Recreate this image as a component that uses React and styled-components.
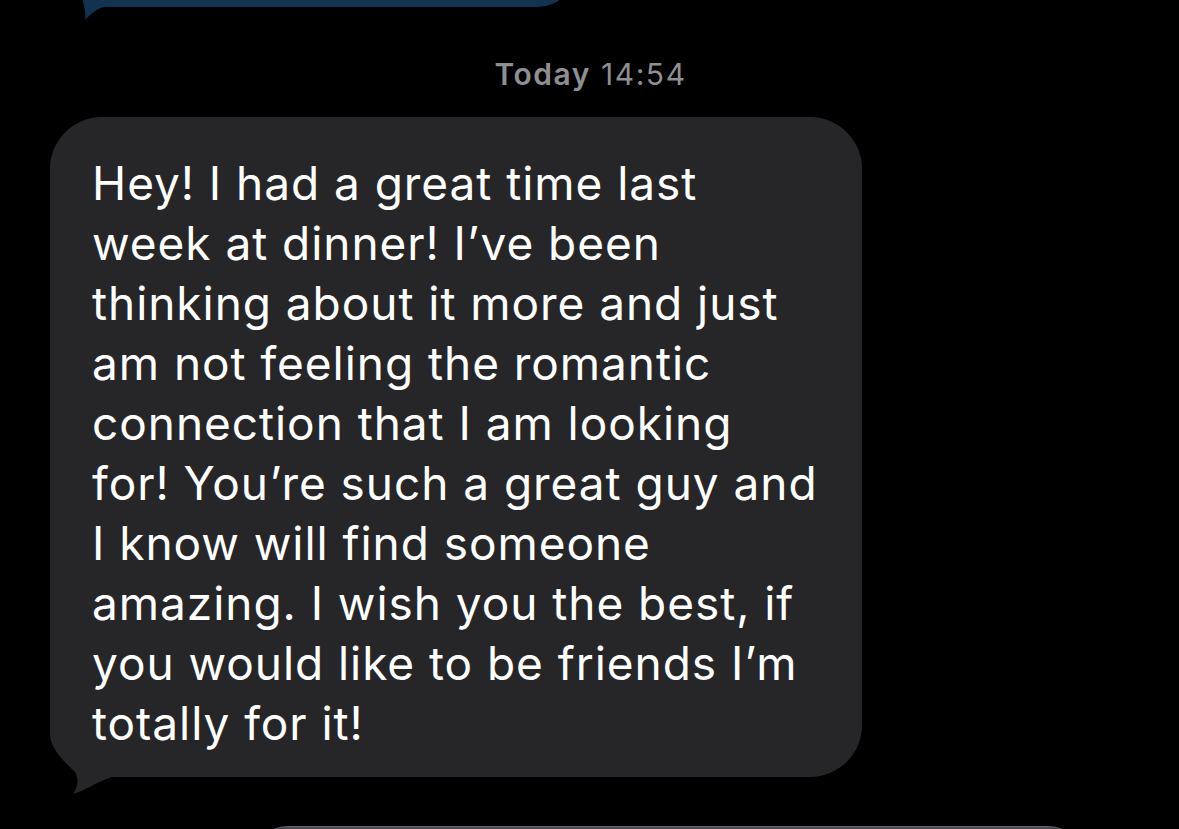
import React from "react";
import styled, { createGlobalStyle } from "styled-components";

const GlobalStyle = createGlobalStyle`
  html, body {
    margin: 0;
    padding: 0;
    background: #000;
  }
  body {
    font-family: Inter, "Noto Sans", "Liberation Sans", sans-serif;
    -webkit-font-smoothing: antialiased;
  }
`;

const Screen = styled.div`
  width: 1179px;
  height: 829px;
  background: #000;
  overflow: hidden;
  display: flex;
  flex-direction: column;
`;

const SentBubble = styled.div`
  position: relative;
  margin-top: -73px;
  margin-left: 83px;
  width: 494px;
  height: 80px;
  flex-shrink: 0;
  background: #12324f;
  border-radius: 48px 48px 48px 20px;
`;

const SentTail = styled.svg`
  position: absolute;
  left: 0;
  bottom: -13px;
`;

const Stamp = styled.div`
  margin-top: 49px;
  padding-left: 2px;
  text-align: center;
  font-size: 30px;
  line-height: 36px;
  color: #8e8e93;
  letter-spacing: 1.55px;

  b {
    font-weight: 600;
  }
`;

const Received = styled.div`
  position: relative;
  margin-top: 25px;
  margin-left: 50px;
  width: 812px;
  height: 660px;
  flex-shrink: 0;
  box-sizing: border-box;
  padding: 36px 0 24px 42px;
  background: #262628;
  border-radius: 52px;
`;

const ReceivedTail = styled.svg`
  position: absolute;
  left: 0;
  bottom: -20px;
`;

const Body = styled.div`
  position: relative;
  z-index: 1;
`;

const Line = styled.span`
  display: block;
  font-size: 46px;
  line-height: 60px;
  color: #fff;
  letter-spacing: 0.95px;
  white-space: nowrap;
`;

const NextBubble = styled.div`
  margin-top: 49px;
  margin-left: 248px;
  width: 840px;
  height: 60px;
  flex-shrink: 0;
  border-radius: 40px 40px 0 0;
  background: linear-gradient(#6e6e72 0px, #48484c 2px, #2c2c2e 6px);
`;

const lines = [
  "Hey! I had a great time last",
  "week at dinner! I\u2019ve been",
  "thinking about it more and just",
  "am not feeling the romantic",
  "connection that I am looking",
  "for! You\u2019re such a great guy and",
  "I know will find someone",
  "amazing. I wish you the best, if",
  "you would like to be friends I\u2019m",
  "totally for it!",
];

export default function App() {
  return (
    <>
      <GlobalStyle />
      <Screen>
        <SentBubble>
          <SentTail width="40" height="20" viewBox="0 0 40 20">
            <path d="M0 0 L0 2 C2 8 3 14 2 20 C8 14 14 8 22 7 L40 7 L40 0 Z" fill="#12324f" />
          </SentTail>
        </SentBubble>
        <Stamp>
          <b>Today</b> 14:54
        </Stamp>
        <Received>
          <ReceivedTail width="90" height="68" viewBox="0 0 90 68">
            <path
              d="M0 0 L0 5 C0 20 15 33 25 43 C29 50 28 58 23 65 C35 62 48 52 62 48 L90 48 L90 0 Z"
              fill="#262628"
            />
          </ReceivedTail>
          <Body>
            {lines.map((t, i) => (
              <Line key={i}>{t}</Line>
            ))}
          </Body>
        </Received>
        <NextBubble />
      </Screen>
    </>
  );
}
